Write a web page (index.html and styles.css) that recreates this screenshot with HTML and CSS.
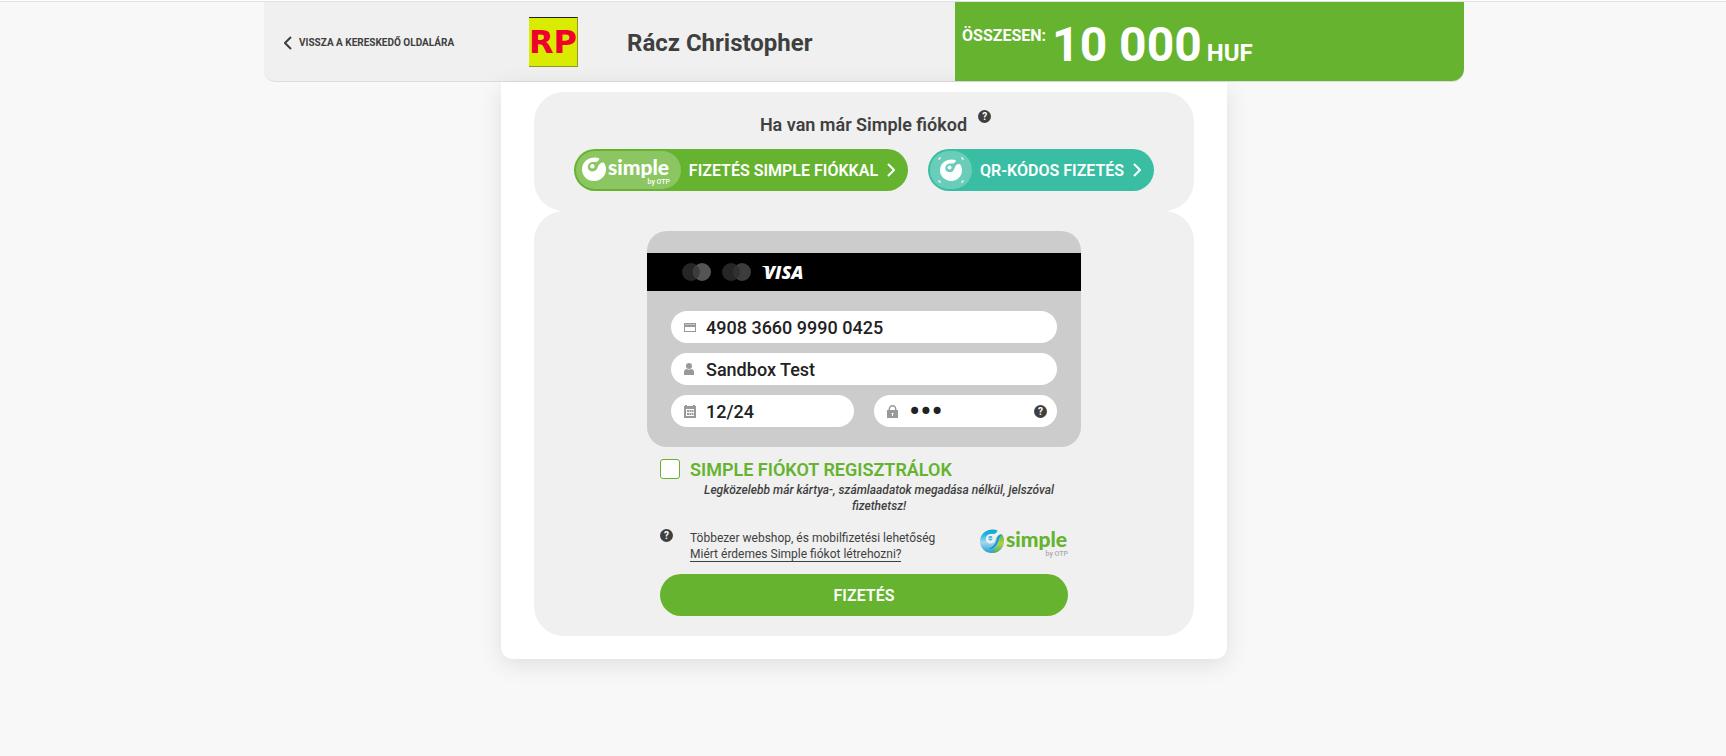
FILE: index.html
```html
<!DOCTYPE html>
<html lang="hu">
<head>
    <meta charset="UTF-8">
    <meta name="viewport" content="width=device-width, initial-scale=1">
    <title>Fizetés</title>
    <link rel="stylesheet" href="styles.css">
</head>
<body>
    <!-- shared icon shapes -->
    <svg class="sprite" aria-hidden="true">
        <symbol id="swirl" viewBox="0 0 24 24">
            <path d="M17.5 1.400 C10.500 -1.600 0 2.500 0 12.400 C0 19 5.400 24 12 24 C18.600 24 24 19 24 12.200 C24 9.600 23.200 7.400 21.800 5.600 C19.200 5 17 6.800 16 9.500 C15 13 12.800 14.600 10.200 14.400 C7.200 14.200 5.600 12 5.800 9.600 C6 6.800 8.400 4.800 11.400 5 C14 5.200 16.800 4.600 17.500 1.400 Z"/>
            <circle cx="10.400" cy="9.200" r="2.200"/>
        </symbol>
        <symbol id="chevron" viewBox="0 0 8 14">
            <path d="M1 1 L7 7 L1 13" fill="none" stroke="currentColor" stroke-width="2"/>
        </symbol>
    </svg>

    <header class="header">
        <a class="back-link" href="#">
            <svg class="back-icon" viewBox="0 0 8 14"><path d="M7 1 L1 7 L7 13" fill="none" stroke="currentColor" stroke-width="2"/></svg>
            Vissza a kereskedő oldalára
        </a>
        <div class="merchant">
            <div class="merchant-logo">RP</div>
            <div class="merchant-name">Rácz Christopher</div>
        </div>
        <div class="total">
            <span class="total-label">Összesen:</span>
            <span class="total-amount">10 000</span>
            <span class="total-currency">HUF</span>
        </div>
    </header>

    <main class="container">
        <section class="panel login-panel">
            <div class="login-title">
                <h1>Ha van már Simple fiókod</h1>
                <button type="button" class="help" aria-label="Súgó">?</button>
            </div>
            <div class="login-buttons">
                <button type="button" class="pill-btn pill-btn-green">
                    <span class="pill-logo pill-logo-wide">
                        <svg class="simple-logo" viewBox="0 0 90 30" fill="#fff">
                            <use href="#swirl" width="24" height="24"/>
                            <text x="26" y="18" class="logo-text">simple</text>
                            <text x="88" y="27" class="logo-sub">by OTP</text>
                        </svg>
                    </span>
                    Fizetés Simple fiókkal
                    <svg class="chevron"><use href="#chevron"/></svg>
                </button>
                <button type="button" class="pill-btn pill-btn-teal">
                    <span class="pill-logo pill-logo-round">
                        <svg class="qr-logo" viewBox="0 0 26 26" fill="#fff">
                            <use href="#swirl" x="2" y="2" width="22" height="22"/>
                            <path d="M1 3 V1 H3 M23 1 H25 V3 M25 23 V25 H23 M3 25 H1 V23" fill="none" stroke="#fff" stroke-width="1"/>
                        </svg>
                    </span>
                    QR-kódos fizetés
                    <svg class="chevron"><use href="#chevron"/></svg>
                </button>
            </div>
        </section>

        <section class="panel card-panel">
            <form class="pay-form">
                <div class="card">
                    <div class="card-stripe">
                        <svg class="brand-circles" viewBox="0 0 30 18">
                            <circle cx="9" cy="9" r="9" fill="#262626"/>
                            <circle cx="20" cy="9" r="9" fill="#555"/>
                            <path d="M14.500 2 A9 9 0 0 1 14.500 16 A9 9 0 0 1 14.500 2" fill="#3c3c3c"/>
                        </svg>
                        <svg class="brand-circles" viewBox="0 0 30 18">
                            <circle cx="9" cy="9" r="9" fill="#262626"/>
                            <circle cx="20" cy="9" r="9" fill="#3c3c3c"/>
                            <path d="M14.500 2 A9 9 0 0 1 14.500 16 A9 9 0 0 1 14.500 2" fill="#303030"/>
                        </svg>
                        <svg class="brand-visa" viewBox="0 0 52 22" fill="#fff">
                            <path d="M0 5 H6 L8 11 C6 8 4 6.500 0 5.500 Z"/>
                            <text x="2" y="18" class="visa-text">VISA</text>
                        </svg>
                    </div>
                    <div class="card-fields">
                        <label class="field">
                            <svg class="field-icon" viewBox="0 -1 12 14"><path fill-rule="evenodd" d="M0 2 H12 V11 H0 Z M1 6 V10 H11 V6 Z"/><path d="M1 3 H11 V4 H1 Z" fill="#c4c4c4"/></svg>
                            <input type="text" class="field-input" value="4908 3660 9990 0425" aria-label="Kártyaszám">
                        </label>
                        <label class="field">
                            <svg class="field-icon" viewBox="0 -1 12 14"><circle cx="5" cy="3" r="3"/><path d="M0 12 V9 C0 7 1.500 6 3 6 Q5 7.500 7 6 C8.500 6 10 7 10 9 V12 Z"/></svg>
                            <input type="text" class="field-input" value="Sandbox Test" aria-label="Kártyára írt név">
                        </label>
                        <div class="field-row">
                            <label class="field">
                                <svg class="field-icon" viewBox="0 -1 12 14"><path fill-rule="evenodd" d="M0 1 H1 V0 H3 V1 H9 V0 H11 V1 H12 V13 H0 Z M2 4 V11 H10 V4 Z"/><path d="M3 5h2v2h-2z M5.500 5h1.500v2h-1.500z M7.500 5h2v2h-2z M3 8h2v2h-2z M5.500 8h1.500v2h-1.500z M7.500 8h2v2h-2z"/></svg>
                                <input type="text" class="field-input" value="12/24" aria-label="Lejárat">
                            </label>
                            <label class="field">
                                <svg class="field-icon" viewBox="0 -1 12 14"><path fill-rule="evenodd" d="M0 5 H1.500 V4.500 A4 4.500 0 0 1 9.500 4.500 V5 H11 V13 H0 Z M3 5 H8 V4.500 A2.500 3 0 0 0 3 4.500 Z M4.500 8 V9 H5 V11 H6 V9 H6.500 V8 Z"/></svg>
                                <input type="password" class="field-input field-input-cvc" value="123" aria-label="CVC kód">
                                <button type="button" class="help" aria-label="Súgó">?</button>
                            </label>
                        </div>
                    </div>
                </div>

                <div class="register">
                    <input type="checkbox" id="register" class="register-check">
                    <div class="register-content">
                        <label for="register" class="register-label">Simple fiókot regisztrálok</label>
                        <p class="register-note">Legközelebb már kártya-, számlaadatok megadása nélkül, jelszóval fizethetsz!</p>
                    </div>
                </div>

                <div class="info">
                    <button type="button" class="help" aria-label="Súgó">?</button>
                    <p class="info-text">Többezer webshop, és mobilfizetési lehetőség<br><a href="#">Miért érdemes Simple fiókot létrehozni?</a></p>
                    <svg class="simple-logo" viewBox="0 0 90 30">
                        <defs>
                            <linearGradient id="swirlFill" x1="0" y1="0" x2="0" y2="1">
                                <stop offset="0" stop-color="#10a5c8"/>
                                <stop offset="0.200" stop-color="#1cb4e4"/>
                                <stop offset="0.550" stop-color="#a5d8ee"/>
                                <stop offset="1" stop-color="#1d9fd0"/>
                            </linearGradient>
                            <linearGradient id="leafFill" x1="0" y1="0" x2="0" y2="1">
                                <stop offset="0" stop-color="#5cb648"/>
                                <stop offset="0.500" stop-color="#b4cf4a"/>
                                <stop offset="1" stop-color="#4fae5a"/>
                            </linearGradient>
                        </defs>
                        <use href="#swirl" width="24" height="24" fill="url(#swirlFill)"/>
                        <path d="M21.800 5.600 C19 5.500 17.500 8 16.600 11 C15.500 15 13 18 9 20 C13 20.500 16.500 17 18 13 Z" fill="#1593cf"/>
                        <path d="M21.800 5.600 C24.500 9 24.500 14 22.500 17.500 C20 22 16 24 11 24 C16 20 17.500 17 18.500 12 C19 9 20 7 21.800 5.600 Z" fill="url(#leafFill)"/>
                        <text x="26" y="18" class="logo-text" fill="#65b32e">simple</text>
                        <text x="88" y="27" class="logo-sub" fill="#aaa">by OTP</text>
                    </svg>
                </div>

                <button type="submit" class="submit-btn">Fizetés</button>
            </form>
        </section>
    </main>
</body>
</html>
```
FILE: styles.css
```css
* {
    box-sizing: border-box;
}
body {
    margin: 0;
    padding: 0 0 0 2px;
    border-top: 1px solid #fff;
    background: #f8f8f8;
    box-shadow: inset 0 1px 0 #e0e0e0;
    color: #3f3f3f;
    font-family: Roboto, "Liberation Sans", sans-serif;
    font-size: 12px;
}
button {
    border: 0;
    padding: 0;
    font-family: inherit;
    cursor: pointer;
}
h1, p {
    margin: 0;
}
.sprite {
    display: none;
}

/* header */
.header {
    display: flex;
    max-width: 1200px;
    height: 81px;
    margin: 0 auto;
    background: #f0f0f0;
    border-top: 1px solid #e0e0e0;
    border-bottom: 1px solid #dcdcdc;
    border-radius: 0 0 12px 12px;
}
.back-link {
    display: flex;
    align-items: center;
    gap: 7px;
    width: 265px;
    padding: 2px 0 0 20px;
    color: inherit;
    font-size: 10px;
    font-weight: 700;
    text-decoration: none;
    text-transform: uppercase;
}
.back-icon {
    width: 8px;
    height: 14px;
}
.merchant {
    display: flex;
    flex: 1;
    align-items: center;
    gap: 49px;
}
.merchant-logo {
    display: flex;
    justify-content: center;
    width: 49px;
    height: 50px;
    background: #d8eb00;
    border: 1px solid #8f9c20;
    border-top-color: #222;
    border-left: 0;
    color: #f0002d;
    font: 700 32px/48px "DejaVu Sans", sans-serif;
}
.merchant-name {
    padding-top: 2px;
    font-size: 24px;
    font-weight: 700;
}
.total {
    position: relative;
    display: flex;
    align-items: baseline;
    width: 509px;
    padding: 14px 0 0 7px;
    background: #65b32e;
    border-radius: 0 0 12px 0;
    color: #fff;
    font-weight: 700;
}
.total-label {
    align-self: flex-start;
    padding-top: 10px;
    margin-right: 6px;
    font-size: 16px;
    text-transform: uppercase;
}
.total-amount {
    margin-right: 5px;
    font-size: 48px;
}
.total-currency {
    font-size: 24px;
}

/* white sheet */
.container {
    max-width: 726px;
    margin: 0 auto 24px;
    padding: 10px 33px 23px;
    background: #fff;
    border-radius: 0 0 12px 12px;
    box-shadow: 0 6px 24px rgba(0, 0, 0, 0.1);
}
.panel {
    background: #f0f0f0;
    border-radius: 30px;
}
.login-panel {
    padding: 18px 20px 20px;
}
.login-title {
    display: flex;
    justify-content: center;
    gap: 11px;
    height: 39px;
    padding-left: 23px;
}
.login-title h1 {
    padding-top: 4px;
    font-size: 18px;
    font-weight: 600;
}
.help {
    flex: none;
    width: 13px;
    height: 13px;
    background: #3f3f3f;
    border-radius: 50%;
    color: #fff;
    font-size: 10px;
    font-weight: 700;
    line-height: 13px;
}
.login-buttons {
    display: flex;
    justify-content: center;
    gap: 20px;
}
.pill-btn {
    display: flex;
    align-items: center;
    gap: 8px;
    height: 42px;
    padding: 0 13px 0 2px;
    border-radius: 21px;
    color: #fff;
    font-size: 16px;
    font-weight: 600;
    text-transform: uppercase;
}
.pill-btn-green {
    background: #65b32e;
}
.pill-btn-teal {
    background: #39bda3;
}
.pill-logo {
    display: flex;
    align-items: center;
    height: 38px;
    background: rgba(255, 255, 255, 0.25);
    border-radius: 19px;
    text-transform: none;
}
.pill-logo-wide {
    width: 105px;
    padding: 4px 0 0 6px;
}
.pill-logo-round {
    justify-content: center;
    width: 42px;
}
.simple-logo {
    flex: none;
    width: 90px;
    height: 30px;
    overflow: visible;
}
.qr-logo {
    width: 26px;
    height: 26px;
}
.logo-text {
    font: 900 21px Lato, sans-serif;
}
.logo-sub {
    font: 500 7px Roboto, sans-serif;
    text-anchor: end;
}
.chevron {
    width: 8px;
    height: 14px;
    margin-left: 1px;
}

/* card form */
.card-panel {
    padding: 20px 20px;
}
.pay-form {
    max-width: 434px;
    margin: 0 auto;
}
.card {
    padding: 22px 0 20px;
    background: #ccc;
    border-radius: 20px;
}
.card-stripe {
    display: flex;
    align-items: center;
    gap: 10px;
    height: 38px;
    padding-left: 35px;
    background: #000;
}
.brand-circles {
    width: 30px;
    height: 18px;
}
.brand-visa {
    width: 52px;
    height: 22px;
}
.visa-text {
    font: italic 800 18px "Open Sans", sans-serif;
}
.card-fields {
    display: flex;
    flex-direction: column;
    gap: 10px;
    padding: 20px 24px 0;
}
.field {
    display: flex;
    flex: 1;
    align-items: center;
    min-width: 0;
    min-height: 32px;
    padding: 0 10px 0 13px;
    background: #fff;
    border-radius: 16px;
}
.field-row {
    display: flex;
    gap: 20px;
}
.field-icon {
    flex: none;
    width: 12px;
    height: 14px;
    fill: #999;
}
.field-input {
    flex: 1;
    min-width: 0;
    height: 32px;
    padding: 0 0 0 10px;
    border: 0;
    outline: 0;
    background: transparent;
    color: #222;
    font: 500 18px Roboto, sans-serif;
}
.field-input-cvc {
    font-size: 32px;
}

/* registration */
.register {
    display: flex;
    gap: 10px;
    padding: 12px 13px 0;
}
.register-check {
    flex: none;
    appearance: none;
    width: 20px;
    height: 20px;
    margin: 0;
    background: #fff;
    border: 1px solid #65b32e;
    border-radius: 3px;
}
.register-check:checked {
    background: #65b32e;
}
.register-content {
    flex: 1;
}
.register-label {
    display: block;
    color: #65b32e;
    font-size: 18px;
    font-weight: 600;
    line-height: 22px;
    text-transform: uppercase;
}
.register-note {
    padding-top: 1px;
    font-size: 12px;
    font-style: italic;
    font-weight: 500;
    line-height: 16px;
    text-align: center;
}
.info {
    display: flex;
    padding: 15px 11px 12px 13px;
}
.info-text {
    flex: 1;
    padding: 1px 0 0 17px;
    line-height: 16px;
}
.info-text a {
    border-bottom: 1px solid #3f3f3f;
    color: inherit;
    text-decoration: none;
}
.submit-btn {
    display: block;
    width: calc(100% - 26px);
    height: 42px;
    margin: 0 13px;
    background: #65b32e;
    border-radius: 21px;
    color: #fff;
    font-size: 16px;
    font-weight: 600;
    text-transform: uppercase;
}
```
